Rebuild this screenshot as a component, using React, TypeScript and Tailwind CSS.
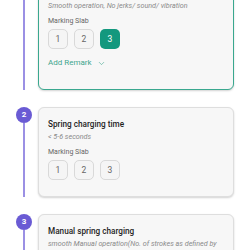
import React from 'react';
import { ChevronDown } from 'lucide-react';

type Step = { n: number; title: string; hint: string; selected: number | null; remark?: boolean; active?: boolean };

const STEPS: Step[] = [
  { n: 1, title: 'Closing operation', hint: 'Smooth operation, No jerks/ sound/ vibration', selected: 3, remark: true, active: true },
  { n: 2, title: 'Spring charging time', hint: '< 5-6 seconds', selected: null },
  { n: 3, title: 'Manual spring charging', hint: 'smooth Manual operation(No. of strokes as defined by manufacturer)', selected: null },
];

const StepCard: React.FC<{ step: Step }> = ({ step }) => (
  <div className="flex gap-[6px]">
    <div className="flex flex-col items-center w-4 shrink-0">
      <div className="w-4 h-4 rounded-full bg-[#6a5bd4] text-white text-[8px] font-bold flex items-center justify-center">{step.n}</div>
      <div className="w-[1.5px] flex-1 bg-[#9b90e4]" />
    </div>
    <div
      className={`flex-1 rounded-[6px] bg-[#f7f7f7] pl-[9px] pr-2 pt-[10px] shadow-[0_1px_2px_rgba(0,0,0,0.18)] border ${step.active ? 'border-[#3aa88f] pb-[20px]' : 'border-[#dedede] pb-[16px]'}`}
    >
      <div className="text-[8.2px] leading-[12px] font-medium text-[#1f1f1f]">{step.title}</div>
      <div className="mt-[2px] text-[7.2px] leading-[10px] italic text-[#8a8a8a]">{step.hint}</div>
      <div className="mt-[5px] text-[7px] leading-[10px] text-[#666]">Marking Slab</div>
      <div className="mt-[3px] flex gap-[6px]">
        {[1, 2, 3].map(v => (
          <div
            key={v}
            className={`w-5 h-5 rounded-[5px] flex items-center justify-center text-[8.5px] ${step.selected === v ? 'bg-[#13987e] text-white' : 'bg-[#f5f5f5] border border-[#d9d9d9] text-[#666]'}`}
          >
            {v}
          </div>
        ))}
      </div>
      {step.remark && (
        <div className="mt-[8px] flex items-center gap-[5px] text-[8px] leading-[12px] text-[#3fa68e]">
          Add Remark <ChevronDown size={9} strokeWidth={1.6} />
        </div>
      )}
    </div>
  </div>
);

export default function App() {
  return (
    <div className="w-[250px] h-[250px] overflow-hidden bg-white" style={{ fontFamily: 'Roboto, "Noto Sans", sans-serif' }}>
      <div className="-mt-[24px] pl-4 pr-4 flex flex-col gap-[17px]">
        {STEPS.map(s => <StepCard key={s.n} step={s} />)}
      </div>
    </div>
  );
}
